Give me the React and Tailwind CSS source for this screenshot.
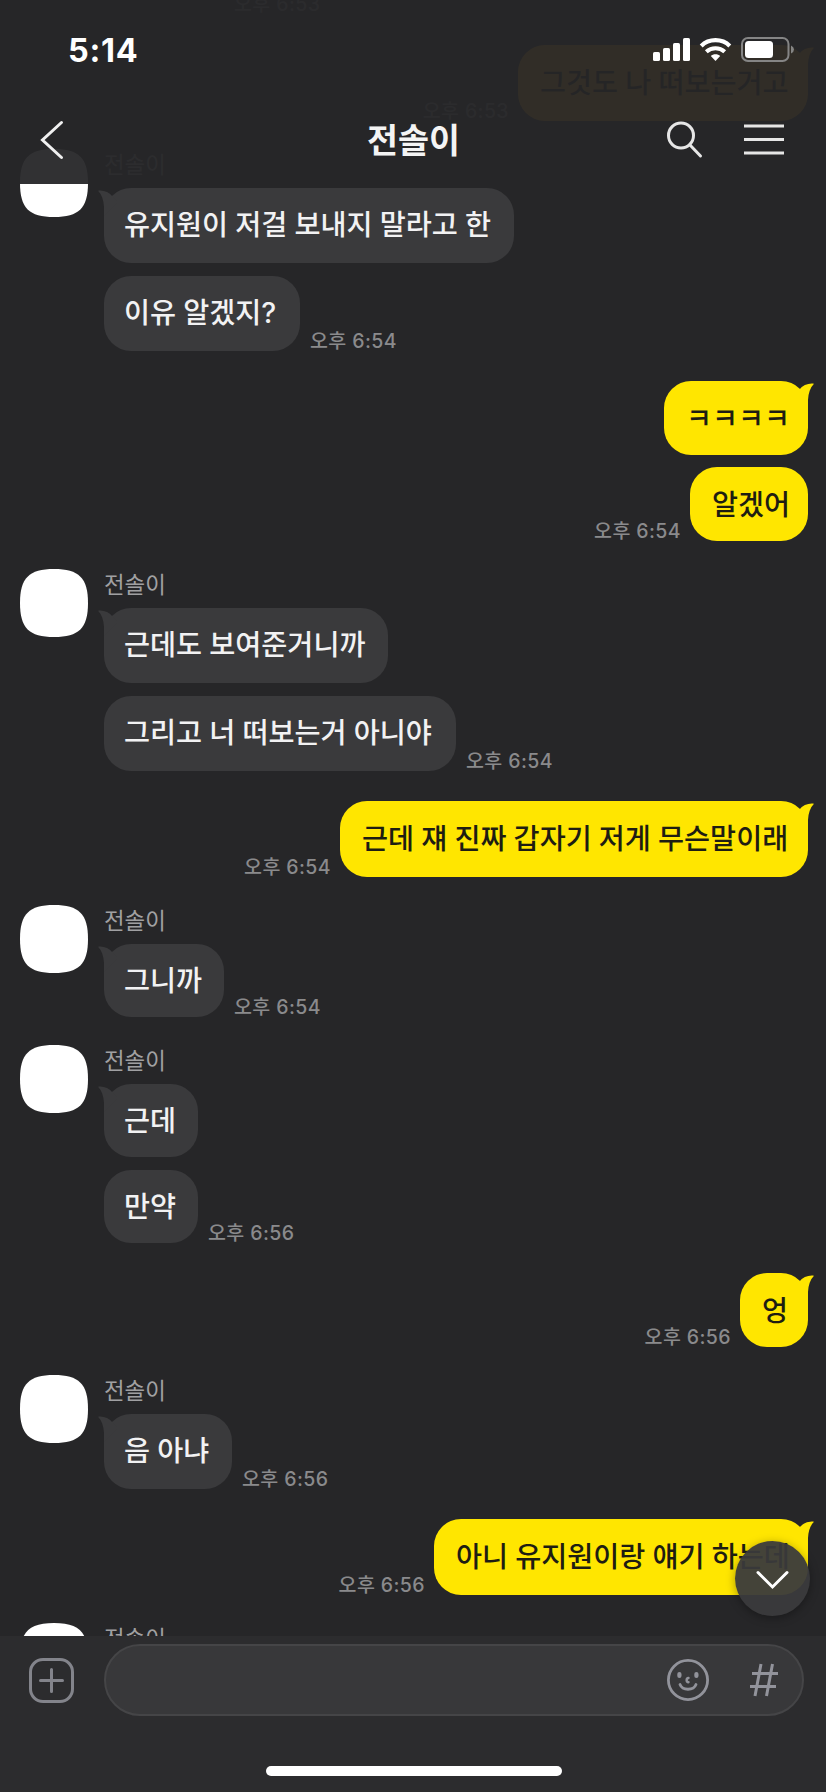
const FONT = "font-['Inter','Noto_Sans_CJK_KR',sans-serif]";

function Avatar() {
  return (
    <svg className="block h-[68px] w-[68px] shrink-0" viewBox="0 0 68 68" fill="#fff">
      <path d="M0 34C0 9 9 0 34 0S68 9 68 34S59 68 34 68S0 59 0 34Z" />
    </svg>
  );
}

function Tail({ mine, color }) {
  return (
    <svg
      className={mine ? "absolute -right-[6px] top-[2px] h-[26px] w-[20px]" : "absolute -left-[6px] top-[2px] h-[26px] w-[20px]"}
      viewBox="0 0 20 26"
      fill={color}
    >
      <path
        transform={mine ? "translate(20 0) scale(-1 1)" : undefined}
        d="M0.6 0.6C5 0.6 10 1.4 13.6 5.6L20 12L6 26V17C5.6 10 3.8 4.6 0.2 1.1Z"
      />
    </svg>
  );
}

function Bubble({ mine, amber, tail, w, h, children }) {
  const color = amber ? "#ffb214" : mine ? "#ffe600" : "#3a3a3c";
  return (
    <div
      className={
        (mine ? "text-[#1e1d12] pt-[24px] pl-[22px]" : "text-[#f2f2f3] pt-[23px] pl-[20px]") +
        " relative flex shrink-0 items-start rounded-[27px] text-[28.3px] leading-[28px] font-medium [word-spacing:-0.4px] whitespace-nowrap"
      }
      style={{ width: w, height: h, backgroundColor: color }}
    >
      {tail && <Tail mine={mine} color={color} />}
      <span className="relative">{children}</span>
    </div>
  );
}

function Time({ children }) {
  return (
    <span className="text-[19.5px] leading-[20px] font-medium tracking-[0.4px] whitespace-nowrap text-[#8a8a8c]">
      {children}
    </span>
  );
}

function Incoming({ items, time }) {
  return (
    <div className="flex gap-4 pl-5">
      <Avatar />
      <div className="flex flex-col">
        <div className="h-[39px] pt-[4px] text-[22.4px] leading-[24px] text-[#a0a0a2]">전솔이</div>
        <div className="flex flex-col gap-[13px]">
          {items.map((m, i) => (
            <div key={m.text} className="flex items-end gap-[10px]">
              <Bubble tail={i === 0} w={m.w} h={m.h}>{m.text}</Bubble>
              {i === items.length - 1 && time && <Time>{time}</Time>}
            </div>
          ))}
        </div>
      </div>
    </div>
  );
}

function Outgoing({ items, time, amber }) {
  return (
    <div className="flex flex-col gap-[12px] pr-[18px]">
      {items.map((m, i) => (
        <div key={m.text} className="flex items-end justify-end gap-[9px]">
          {i === items.length - 1 && <Time>{time}</Time>}
          <Bubble mine amber={amber} tail={i === 0} w={m.w} h={m.h}>{m.text}</Bubble>
        </div>
      ))}
    </div>
  );
}

function StatusBar() {
  return (
    <div className="flex h-[100px] items-start justify-between pt-[36px] pr-[31px] pl-[68px]">
      <div className="text-[32.5px] leading-[29px] font-bold tracking-[0.7px] text-white">5:14</div>
      <svg className="mt-px block h-[26px] w-[142px]" viewBox="0 0 142 26" fill="#fff">
        <rect x="0" y="15" width="7" height="9" rx="1.6" />
        <rect x="10" y="11" width="7" height="13" rx="1.6" />
        <rect x="20" y="6" width="7" height="18" rx="1.6" />
        <rect x="30" y="1" width="7" height="23" rx="1.6" />
        <path d="M62.500 24L57.800 19C60 16.800 65 16.800 67.200 19Z" />
        <path d="M53.300 14.800C58.500 9.900 66.500 9.900 71.700 14.800" fill="none" stroke="#fff" strokeWidth="4" />
        <path d="M48.200 8.900C56 1.300 69 1.300 76.800 8.900" fill="none" stroke="#fff" strokeWidth="4.200" />
        <rect x="89" y="1" width="46.500" height="23" rx="6" fill="none" stroke="#858585" strokeWidth="2" />
        <rect x="92" y="4" width="28" height="17" rx="3.500" />
        <path d="M138 8.500Q141 10 141 12.500T138 16.500Z" fill="#858585" />
      </svg>
    </div>
  );
}

function TitleBar() {
  return (
    <div className="flex h-[84px] items-start justify-between pr-[41px] pl-[40px]">
      <svg className="mt-[20px] block h-[40px] w-[116px]" viewBox="0 0 116 40" fill="none" stroke="#f0f0f0" strokeWidth="3" strokeLinecap="round">
        <path d="M21.500 2.500L2.500 20L21.500 37.500" />
      </svg>
      <h1 className="mt-[23px] ml-[4px] text-[33.7px] leading-[36px] font-bold text-[#f4f4f4]">전솔이</h1>
      <svg className="mt-[20px] block h-[40px] w-[118px]" viewBox="0 0 118 40" fill="none" stroke="#e6e6e6" strokeWidth="3">
        <circle cx="14" cy="15.500" r="12.500" />
        <path d="M23 25L33.500 36" strokeLinecap="round" />
        <path d="M77 6H117M77 19.500H117M77 33H117" />
      </svg>
    </div>
  );
}

function Composer() {
  return (
    <footer className="relative h-[156px] bg-[#2c2c2e] pt-[8px]">
      <div className="flex items-start pr-[22px] pl-[29px]">
        <svg className="mt-[14px] block h-[45px] w-[45px]" viewBox="0 0 45 45" fill="none" stroke="#83848b" strokeWidth="3" strokeLinecap="round">
          <rect x="1.500" y="1.500" width="42" height="42" rx="12.500" />
          <path d="M22.500 11.500V33.500M11.500 22.500H33.500" />
        </svg>
        <div className="ml-[30px] flex h-[72px] flex-1 items-center justify-end rounded-full border-2 border-[#454547] bg-[#38383a] pr-[23px]">
          <svg className="block h-[42px] w-[42px]" viewBox="0 0 42 42" fill="none" stroke="#92939b" strokeWidth="2.800" strokeLinecap="round">
            <circle cx="21" cy="21" r="19.600" />
            <path d="M13 25.500C15.500 31.800 26.500 31.800 29 25.500" />
            <path d="M21.500 19C19 19.300 19 23 21.500 23.200" strokeWidth="2.400" />
            <rect x="10.300" y="13" width="4.200" height="6" rx="2.100" fill="#92939b" stroke="none" />
            <rect x="27.300" y="13" width="4.200" height="6" rx="2.100" fill="#92939b" stroke="none" />
          </svg>
          <svg className="ml-[40px] block h-[34px] w-[30px]" viewBox="0 0 30 34" fill="none" stroke="#92939b" strokeWidth="3">
            <path d="M12 1L6 33M23.500 1L17.500 33M3 10.500H29M1 23.500H27" />
          </svg>
        </div>
      </div>
      <div className="mt-[50px] ml-[266px] h-[10px] w-[296px] rounded-full bg-white" />
    </footer>
  );
}

export default function App() {
  return (
    <div className={FONT + " relative flex h-[1792px] w-[826px] flex-col overflow-hidden bg-[#262628]"}>
      <main className="relative h-[1636px] overflow-hidden">
        <div className="flex h-[14px] items-end pl-[234px]">
          <Time>오후 6:53</Time>
        </div>
        <div className="mt-[31px]">
          <Outgoing amber time="오후 6:53" items={[{ text: "그것도 나 떠보는거고", w: 290, h: 76 }]} />
        </div>
        <div className="mt-[28px]">
          <Incoming time="오후 6:54" items={[{ text: "유지원이 저걸 보내지 말라고 한", w: 410, h: 75 }, { text: "이유 알겠지?", w: 196, h: 75 }]} />
        </div>
        <div className="mt-[30px]">
          <Outgoing time="오후 6:54" items={[{ text: "ㅋㅋㅋㅋ", w: 144, h: 74 }, { text: "알겠어", w: 118, h: 74 }]} />
        </div>
        <div className="mt-[28px]">
          <Incoming time="오후 6:54" items={[{ text: "근데도 보여준거니까", w: 284, h: 75 }, { text: "그리고 너 떠보는거 아니야", w: 352, h: 75 }]} />
        </div>
        <div className="mt-[30px]">
          <Outgoing time="오후 6:54" items={[{ text: "근데 쟤 진짜 갑자기 저게 무슨말이래", w: 468, h: 76 }]} />
        </div>
        <div className="mt-[28px]">
          <Incoming time="오후 6:54" items={[{ text: "그니까", w: 120, h: 73 }]} />
        </div>
        <div className="mt-[28px]">
          <Incoming time="오후 6:56" items={[{ text: "근데", w: 94, h: 73 }, { text: "만약", w: 94, h: 73 }]} />
        </div>
        <div className="mt-[30px]">
          <Outgoing time="오후 6:56" items={[{ text: "엉", w: 68, h: 74 }]} />
        </div>
        <div className="mt-[28px]">
          <Incoming time="오후 6:56" items={[{ text: "음 아냐", w: 128, h: 75 }]} />
        </div>
        <div className="mt-[30px]">
          <Outgoing time="오후 6:56" items={[{ text: "아니 유지원이랑 얘기 하는데", w: 374, h: 76 }]} />
        </div>
        <div className="mt-[28px]">
          <Incoming items={[]} />
        </div>
        <button className="absolute top-[1541px] left-[735px] flex h-[75px] w-[75px] items-center justify-center rounded-full bg-[#3a3a3c]/95 shadow-[0_2px_10px_rgba(0,0,0,0.35)]">
          <svg className="mt-[3px] block h-[20px] w-[34px]" viewBox="0 0 34 20" fill="none" stroke="#fff" strokeWidth="3" strokeLinecap="round">
            <path d="M2 2.500L16.500 17L31 2.500" />
          </svg>
        </button>
      </main>
      <Composer />
      <header className="absolute inset-x-0 top-0 h-[184px] bg-[#262628]/95">
        <StatusBar />
        <TitleBar />
      </header>
    </div>
  );
}
